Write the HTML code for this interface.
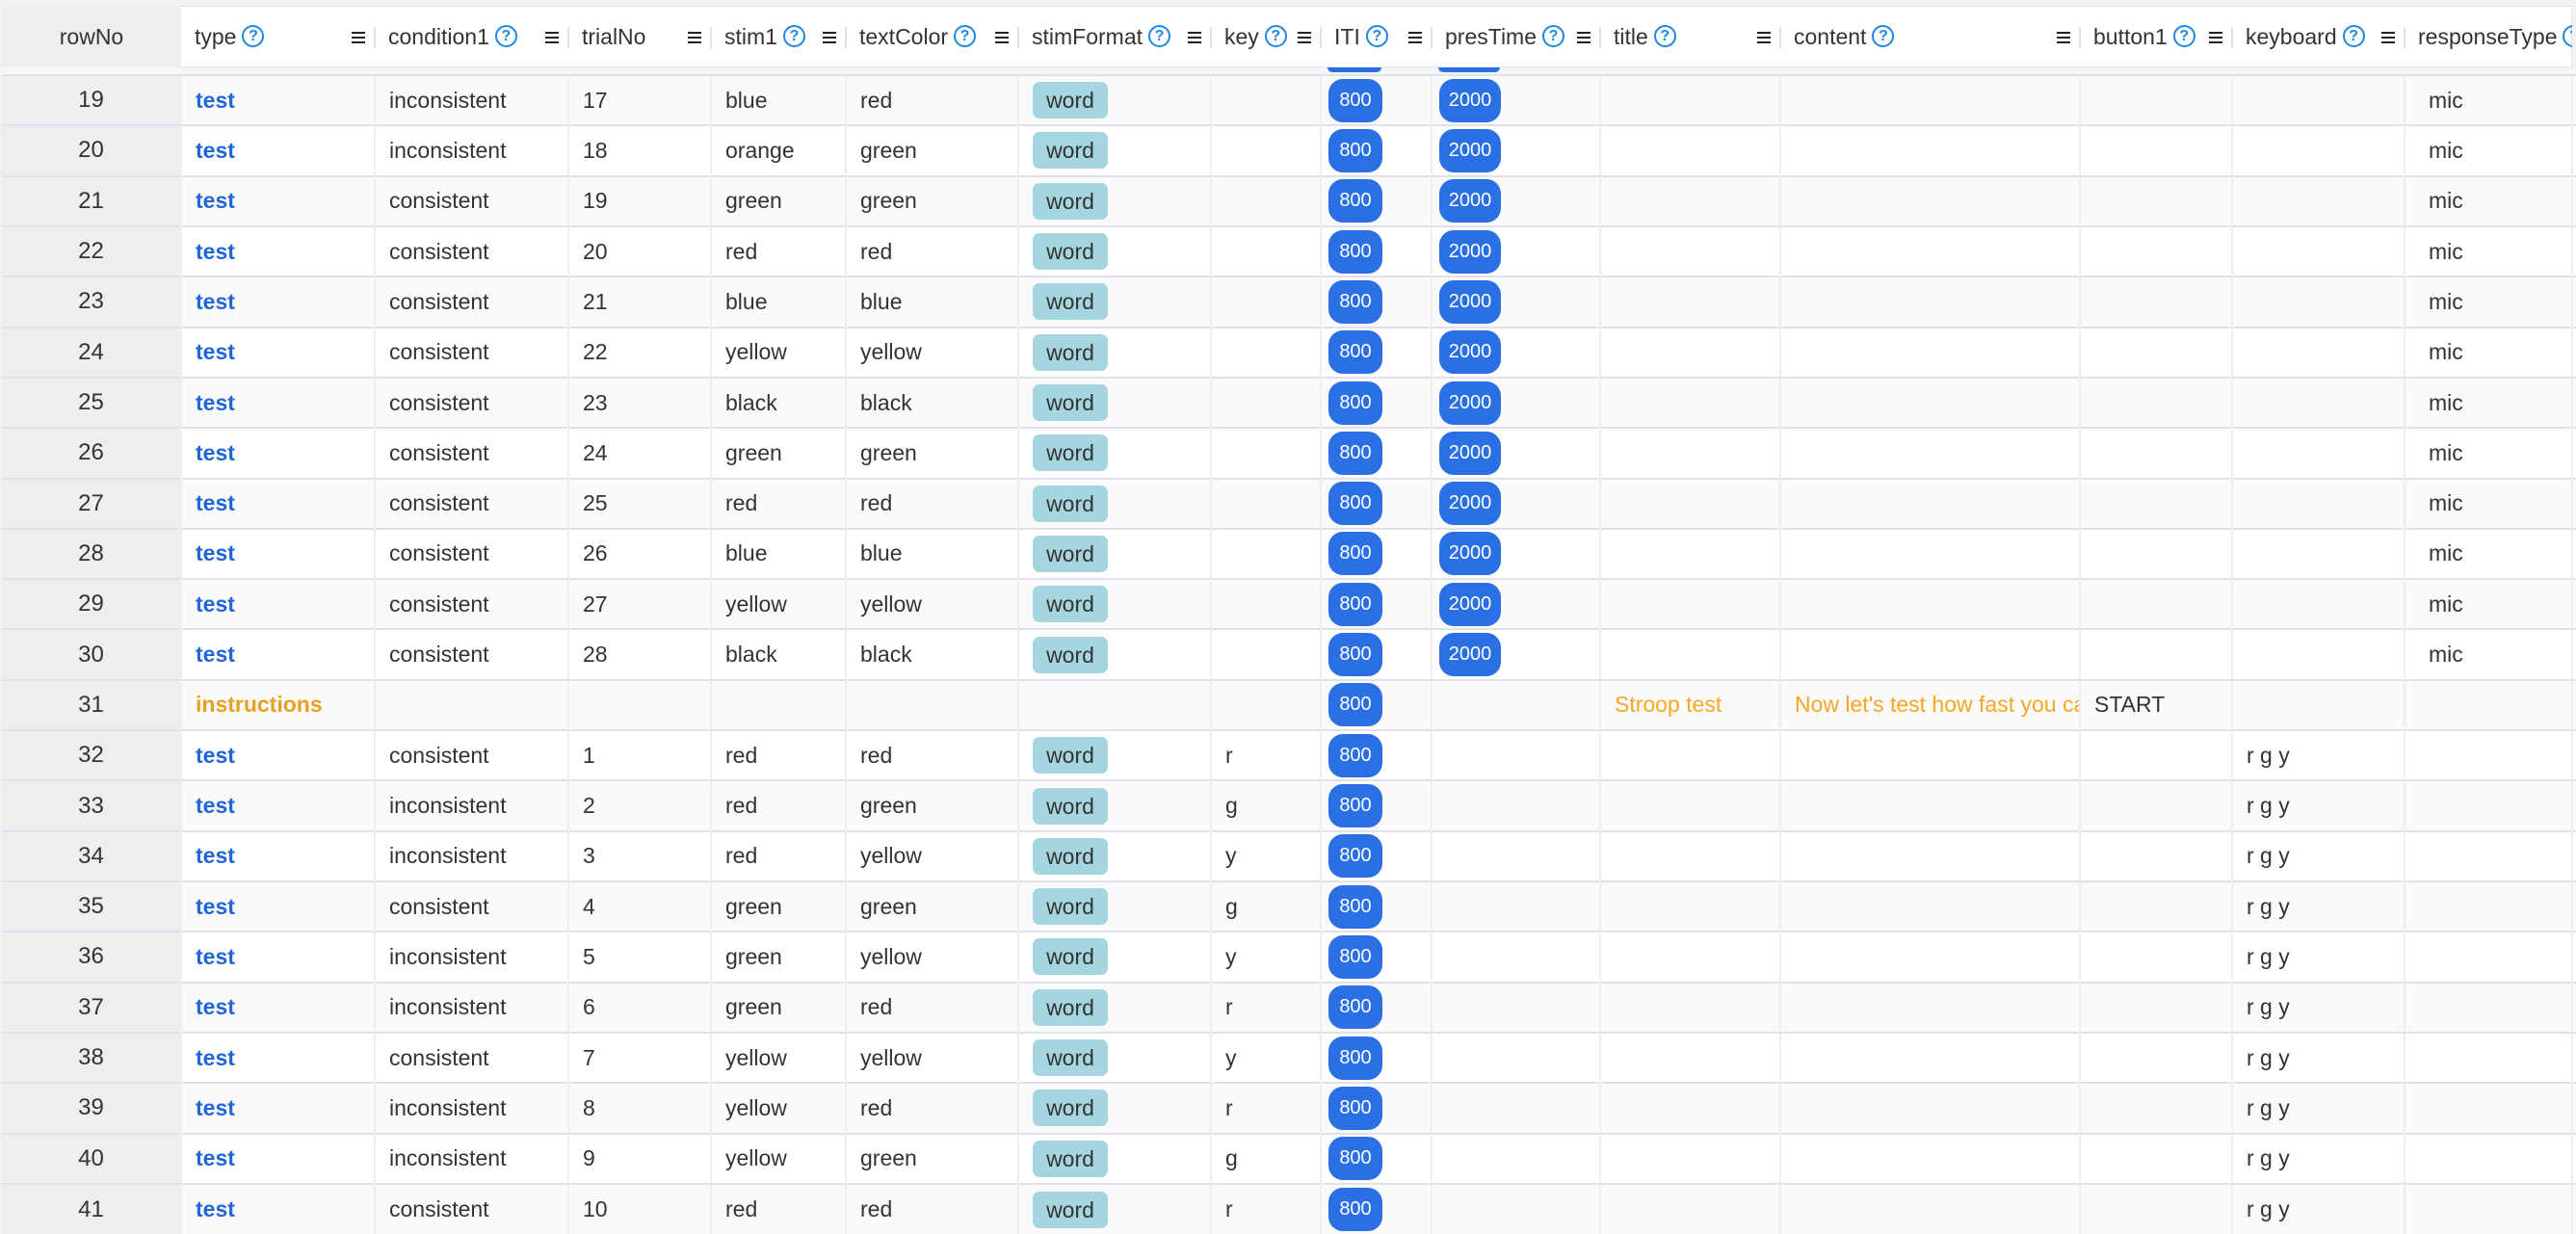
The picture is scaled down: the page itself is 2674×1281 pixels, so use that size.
<!DOCTYPE html>
<html><head><meta charset="utf-8">
<style>
*{box-sizing:border-box;margin:0;padding:0}
body{width:2674px;height:1280px;overflow:hidden;background:#f0f1f3;font-family:"Liberation Sans",Arial,sans-serif;color:#333;position:relative}
#hdr{position:absolute;left:0;top:6px;height:64px;width:2670px}
.hrow{position:absolute;left:188px;top:0;width:2482px;height:64px;background:#fff;border:1px solid #e4e4e4;border-left:none}
.hrn{position:absolute;left:2px;top:0;width:186px;height:64px;background:#eeeeee;font-size:23px;text-align:center;line-height:64px}
.hc{position:absolute;top:0;height:64px;font-size:23px;line-height:64px;padding-left:14px;white-space:nowrap}
.hc .q{display:inline-block;width:23px;height:23px;border:2px solid #1e88e5;border-radius:50%;color:#1e88e5;font-size:16px;line-height:19px;text-align:center;font-weight:bold;vertical-align:middle;margin-left:6px;position:relative;top:-2px}
.hc .m{position:absolute;right:10px;top:27px;width:14px;height:12px;border-top:2px solid #222;border-bottom:2px solid #222}
.hc .m:after{content:"";position:absolute;left:0;right:0;top:3px;border-top:2px solid #222}
.hc .s{position:absolute;right:-1px;top:22px;width:2px;height:22px;background:#e2e2e2}
#peek{position:absolute;top:70px;left:0;width:2674px;height:8px;background:#f5f6f8}
#peek i{position:absolute;top:0;height:5px;background:#2a6fe3;border-radius:0 0 14px 14px}
table{position:absolute;left:2px;top:77px;border-collapse:collapse;table-layout:fixed;width:2672px}
td{height:52.32px;border-top:2px solid #dde2eb;border-left:2px solid #eeeeee;font-size:23px;padding-left:14px;white-space:nowrap;overflow:hidden;vertical-align:middle}
td:first-child{background:#eeeeee;text-align:center;padding-left:0;border-left:none;font-size:24px}
tr:nth-child(odd) td:not(:first-child){background:#fafafa}
tr:nth-child(even) td:not(:first-child){background:#fff}
.t{color:#2166d9;font-weight:bold}
.ins{color:#e8a020;font-weight:bold}
.or{color:#f5a623}
.w{display:inline-block;width:78px;height:38px;line-height:38px;border-radius:7px;background:#a5d5df;text-align:center;color:#333;font-size:23px}
.b{display:inline-block;height:45px;line-height:45px;border-radius:15px;background:#2a6fe3;color:#fff;text-align:center;font-size:20px}
.b8{width:56px;margin-left:-7px}
.b2{width:64px;margin-left:-7px}
.rt{padding-left:24px}
</style></head><body>
<div id="peek"><i style="left:1378px;width:56px"></i><i style="left:1493px;width:64px"></i></div>
<div id="hdr">
<div class="hrn">rowNo</div>
<div class="hrow"></div>
<div class="hc" style="left:188px;width:201px">type<span class="q">?</span><span class="m"></span><span class="s"></span></div>
<div class="hc" style="left:389px;width:201px">condition1<span class="q">?</span><span class="m"></span><span class="s"></span></div>
<div class="hc" style="left:590px;width:148px">trialNo<span class="m"></span><span class="s"></span></div>
<div class="hc" style="left:738px;width:140px">stim1<span class="q">?</span><span class="m"></span><span class="s"></span></div>
<div class="hc" style="left:878px;width:179px">textColor<span class="q">?</span><span class="m"></span><span class="s"></span></div>
<div class="hc" style="left:1057px;width:200px">stimFormat<span class="q">?</span><span class="m"></span><span class="s"></span></div>
<div class="hc" style="left:1257px;width:114px">key<span class="q">?</span><span class="m"></span><span class="s"></span></div>
<div class="hc" style="left:1371px;width:115px">ITI<span class="q">?</span><span class="m"></span><span class="s"></span></div>
<div class="hc" style="left:1486px;width:175px">presTime<span class="q">?</span><span class="m"></span><span class="s"></span></div>
<div class="hc" style="left:1661px;width:187px">title<span class="q">?</span><span class="m"></span><span class="s"></span></div>
<div class="hc" style="left:1848px;width:311px">content<span class="q">?</span><span class="m"></span><span class="s"></span></div>
<div class="hc" style="left:2159px;width:158px">button1<span class="q">?</span><span class="m"></span><span class="s"></span></div>
<div class="hc" style="left:2317px;width:179px">keyboard<span class="q">?</span><span class="m"></span><span class="s"></span></div>
<div class="hc" style="left:2496px;width:174px;overflow:hidden">responseType<span class="q">?</span></div>
</div>
<table>
<colgroup><col style="width:186px"><col style="width:201px"><col style="width:201px"><col style="width:148px"><col style="width:140px"><col style="width:179px"><col style="width:200px"><col style="width:114px"><col style="width:115px"><col style="width:175px"><col style="width:187px"><col style="width:311px"><col style="width:158px"><col style="width:179px"><col style="width:174px"><col style="width:4px"></colgroup>
<tr><td>19</td><td class="t">test</td><td>inconsistent</td><td>17</td><td>blue</td><td>red</td><td><span class="w">word</span></td><td></td><td><span class="b b8">800</span></td><td><span class="b b2">2000</span></td><td></td><td></td><td></td><td></td><td class="rt">mic</td><td></td></tr>
<tr><td>20</td><td class="t">test</td><td>inconsistent</td><td>18</td><td>orange</td><td>green</td><td><span class="w">word</span></td><td></td><td><span class="b b8">800</span></td><td><span class="b b2">2000</span></td><td></td><td></td><td></td><td></td><td class="rt">mic</td><td></td></tr>
<tr><td>21</td><td class="t">test</td><td>consistent</td><td>19</td><td>green</td><td>green</td><td><span class="w">word</span></td><td></td><td><span class="b b8">800</span></td><td><span class="b b2">2000</span></td><td></td><td></td><td></td><td></td><td class="rt">mic</td><td></td></tr>
<tr><td>22</td><td class="t">test</td><td>consistent</td><td>20</td><td>red</td><td>red</td><td><span class="w">word</span></td><td></td><td><span class="b b8">800</span></td><td><span class="b b2">2000</span></td><td></td><td></td><td></td><td></td><td class="rt">mic</td><td></td></tr>
<tr><td>23</td><td class="t">test</td><td>consistent</td><td>21</td><td>blue</td><td>blue</td><td><span class="w">word</span></td><td></td><td><span class="b b8">800</span></td><td><span class="b b2">2000</span></td><td></td><td></td><td></td><td></td><td class="rt">mic</td><td></td></tr>
<tr><td>24</td><td class="t">test</td><td>consistent</td><td>22</td><td>yellow</td><td>yellow</td><td><span class="w">word</span></td><td></td><td><span class="b b8">800</span></td><td><span class="b b2">2000</span></td><td></td><td></td><td></td><td></td><td class="rt">mic</td><td></td></tr>
<tr><td>25</td><td class="t">test</td><td>consistent</td><td>23</td><td>black</td><td>black</td><td><span class="w">word</span></td><td></td><td><span class="b b8">800</span></td><td><span class="b b2">2000</span></td><td></td><td></td><td></td><td></td><td class="rt">mic</td><td></td></tr>
<tr><td>26</td><td class="t">test</td><td>consistent</td><td>24</td><td>green</td><td>green</td><td><span class="w">word</span></td><td></td><td><span class="b b8">800</span></td><td><span class="b b2">2000</span></td><td></td><td></td><td></td><td></td><td class="rt">mic</td><td></td></tr>
<tr><td>27</td><td class="t">test</td><td>consistent</td><td>25</td><td>red</td><td>red</td><td><span class="w">word</span></td><td></td><td><span class="b b8">800</span></td><td><span class="b b2">2000</span></td><td></td><td></td><td></td><td></td><td class="rt">mic</td><td></td></tr>
<tr><td>28</td><td class="t">test</td><td>consistent</td><td>26</td><td>blue</td><td>blue</td><td><span class="w">word</span></td><td></td><td><span class="b b8">800</span></td><td><span class="b b2">2000</span></td><td></td><td></td><td></td><td></td><td class="rt">mic</td><td></td></tr>
<tr><td>29</td><td class="t">test</td><td>consistent</td><td>27</td><td>yellow</td><td>yellow</td><td><span class="w">word</span></td><td></td><td><span class="b b8">800</span></td><td><span class="b b2">2000</span></td><td></td><td></td><td></td><td></td><td class="rt">mic</td><td></td></tr>
<tr><td>30</td><td class="t">test</td><td>consistent</td><td>28</td><td>black</td><td>black</td><td><span class="w">word</span></td><td></td><td><span class="b b8">800</span></td><td><span class="b b2">2000</span></td><td></td><td></td><td></td><td></td><td class="rt">mic</td><td></td></tr>
<tr><td>31</td><td class="ins">instructions</td><td></td><td></td><td></td><td></td><td></td><td></td><td><span class="b b8">800</span></td><td></td><td class="or">Stroop test</td><td class="or">Now let's test how fast you can name colors</td><td>START</td><td></td><td></td><td></td></tr>
<tr><td>32</td><td class="t">test</td><td>consistent</td><td>1</td><td>red</td><td>red</td><td><span class="w">word</span></td><td>r</td><td><span class="b b8">800</span></td><td></td><td></td><td></td><td></td><td>r g y</td><td></td><td></td></tr>
<tr><td>33</td><td class="t">test</td><td>inconsistent</td><td>2</td><td>red</td><td>green</td><td><span class="w">word</span></td><td>g</td><td><span class="b b8">800</span></td><td></td><td></td><td></td><td></td><td>r g y</td><td></td><td></td></tr>
<tr><td>34</td><td class="t">test</td><td>inconsistent</td><td>3</td><td>red</td><td>yellow</td><td><span class="w">word</span></td><td>y</td><td><span class="b b8">800</span></td><td></td><td></td><td></td><td></td><td>r g y</td><td></td><td></td></tr>
<tr><td>35</td><td class="t">test</td><td>consistent</td><td>4</td><td>green</td><td>green</td><td><span class="w">word</span></td><td>g</td><td><span class="b b8">800</span></td><td></td><td></td><td></td><td></td><td>r g y</td><td></td><td></td></tr>
<tr><td>36</td><td class="t">test</td><td>inconsistent</td><td>5</td><td>green</td><td>yellow</td><td><span class="w">word</span></td><td>y</td><td><span class="b b8">800</span></td><td></td><td></td><td></td><td></td><td>r g y</td><td></td><td></td></tr>
<tr><td>37</td><td class="t">test</td><td>inconsistent</td><td>6</td><td>green</td><td>red</td><td><span class="w">word</span></td><td>r</td><td><span class="b b8">800</span></td><td></td><td></td><td></td><td></td><td>r g y</td><td></td><td></td></tr>
<tr><td>38</td><td class="t">test</td><td>consistent</td><td>7</td><td>yellow</td><td>yellow</td><td><span class="w">word</span></td><td>y</td><td><span class="b b8">800</span></td><td></td><td></td><td></td><td></td><td>r g y</td><td></td><td></td></tr>
<tr><td>39</td><td class="t">test</td><td>inconsistent</td><td>8</td><td>yellow</td><td>red</td><td><span class="w">word</span></td><td>r</td><td><span class="b b8">800</span></td><td></td><td></td><td></td><td></td><td>r g y</td><td></td><td></td></tr>
<tr><td>40</td><td class="t">test</td><td>inconsistent</td><td>9</td><td>yellow</td><td>green</td><td><span class="w">word</span></td><td>g</td><td><span class="b b8">800</span></td><td></td><td></td><td></td><td></td><td>r g y</td><td></td><td></td></tr>
<tr><td>41</td><td class="t">test</td><td>consistent</td><td>10</td><td>red</td><td>red</td><td><span class="w">word</span></td><td>r</td><td><span class="b b8">800</span></td><td></td><td></td><td></td><td></td><td>r g y</td><td></td><td></td></tr>
</table>
</body></html>
